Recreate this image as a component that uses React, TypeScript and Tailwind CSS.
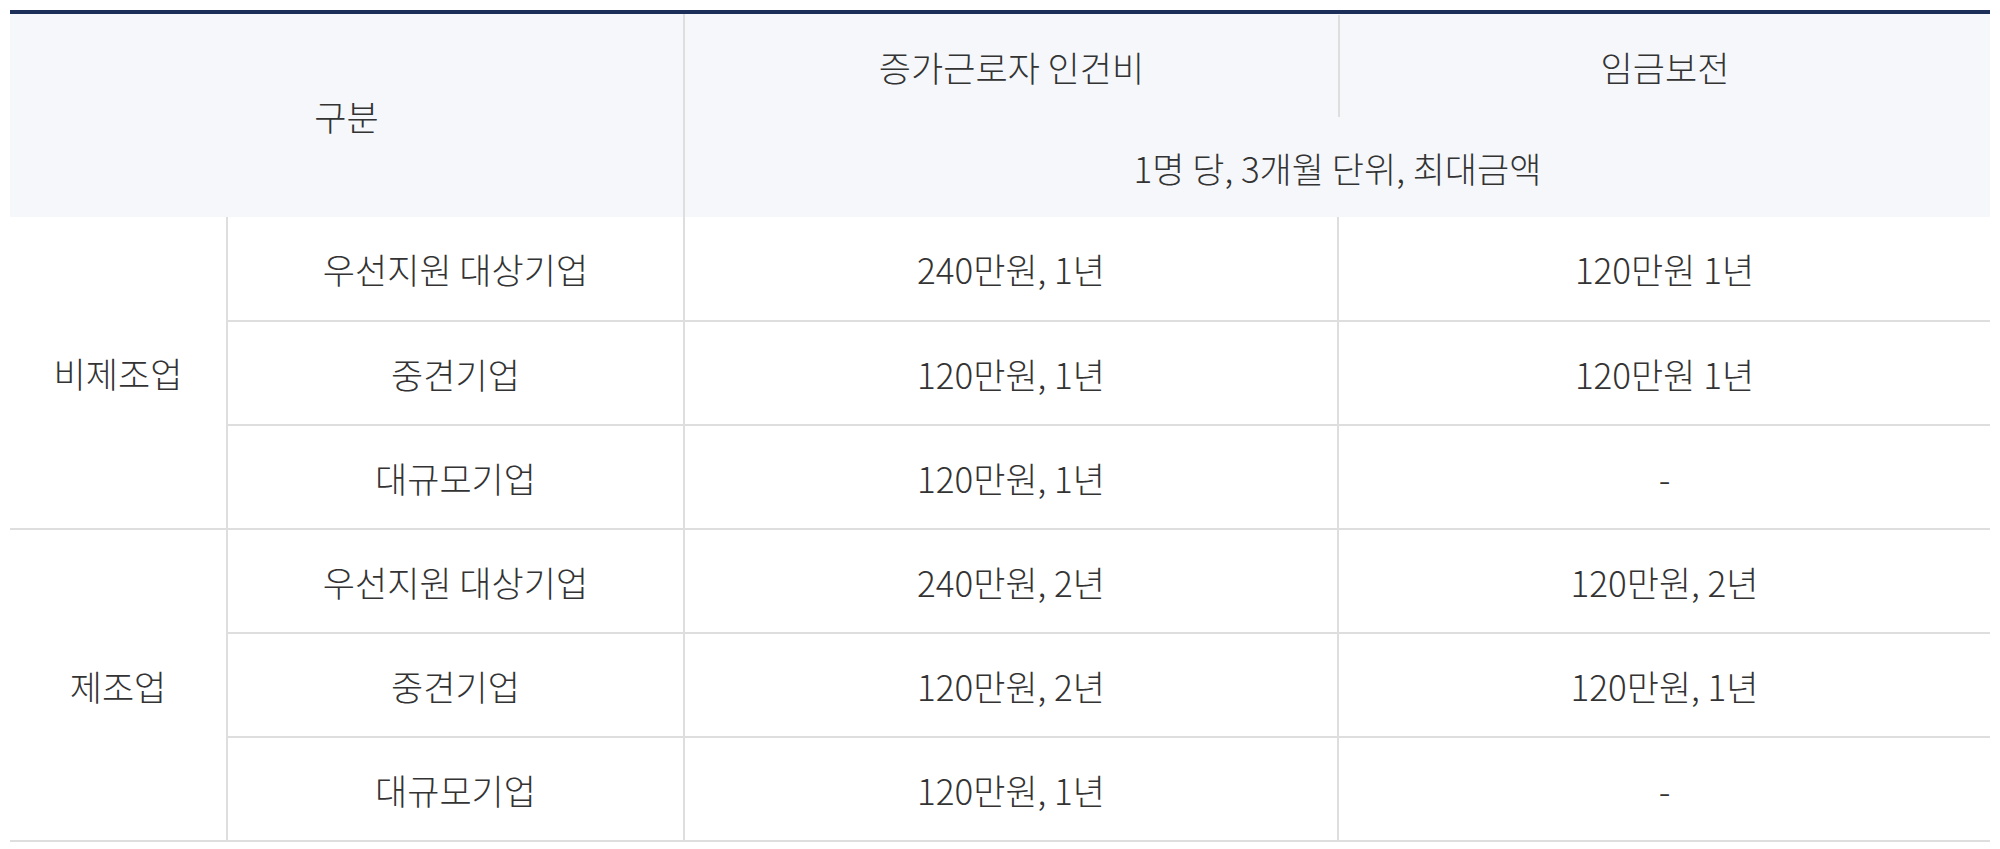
import React from "react";

const line = "border-[#dedede]";

export default function App() {
  const font = { fontFamily: '"Noto Sans CJK KR", "Noto Sans", sans-serif' };
  const td = `border-b-2 ${line} text-center align-middle`;
  return (
    <div className="w-[2000px] h-[849px] bg-white pt-[10px] pl-[10px]" style={font}>
      <table className="w-[1980px] table-fixed border-collapse text-[35px] font-light text-[#333] leading-none">
        <colgroup>
          <col className="w-[217px]" />
          <col className="w-[457px]" />
          <col className="w-[654px]" />
          <col className="w-[652px]" />
        </colgroup>
        <thead>
          <tr className="h-[106px] border-t-4 border-[#1b2f59]">
            <th colSpan={2} rowSpan={2} className="bg-[#f5f7fa] font-light text-center align-middle">
              구분
            </th>
            <th className={`bg-[#f5f7fa] font-light text-center align-middle border-l-2 ${line}`}>
              <div className="flex items-center justify-center h-[102px]">증가근로자 인건비</div>
            </th>
            <th className="bg-[#f5f7fa] font-light text-center align-middle p-0">
              <div className={`flex items-center justify-center h-[102px] border-l-2 ${line}`}>임금보전</div>
            </th>
          </tr>
          <tr className="h-[99px]">
            <th colSpan={2} className={`bg-[#f5f7fa] font-light text-center align-middle border-l-2 ${line}`}>
              1명 당, 3개월 단위, 최대금액
            </th>
          </tr>
        </thead>
        <tbody>
          <tr className="h-[104px]">
            <td rowSpan={3} className={`${td} border-r-2`}>비제조업</td>
            <td className={`${td} border-r-2`}>우선지원 대상기업</td>
            <td className={`${td} border-r-2`}>240만원, 1년</td>
            <td className={td}>120만원 1년</td>
          </tr>
          <tr className="h-[104px]">
            <td className={`${td} border-r-2`}>중견기업</td>
            <td className={`${td} border-r-2`}>120만원, 1년</td>
            <td className={td}>120만원 1년</td>
          </tr>
          <tr className="h-[104px]">
            <td className={`${td} border-r-2`}>대규모기업</td>
            <td className={`${td} border-r-2`}>120만원, 1년</td>
            <td className={td}>-</td>
          </tr>
          <tr className="h-[104px]">
            <td rowSpan={3} className={`${td} border-r-2`}>제조업</td>
            <td className={`${td} border-r-2`}>우선지원 대상기업</td>
            <td className={`${td} border-r-2`}>240만원, 2년</td>
            <td className={td}>120만원, 2년</td>
          </tr>
          <tr className="h-[104px]">
            <td className={`${td} border-r-2`}>중견기업</td>
            <td className={`${td} border-r-2`}>120만원, 2년</td>
            <td className={td}>120만원, 1년</td>
          </tr>
          <tr className="h-[104px]">
            <td className={`${td} border-r-2`}>대규모기업</td>
            <td className={`${td} border-r-2`}>120만원, 1년</td>
            <td className={td}>-</td>
          </tr>
        </tbody>
      </table>
    </div>
  );
}
